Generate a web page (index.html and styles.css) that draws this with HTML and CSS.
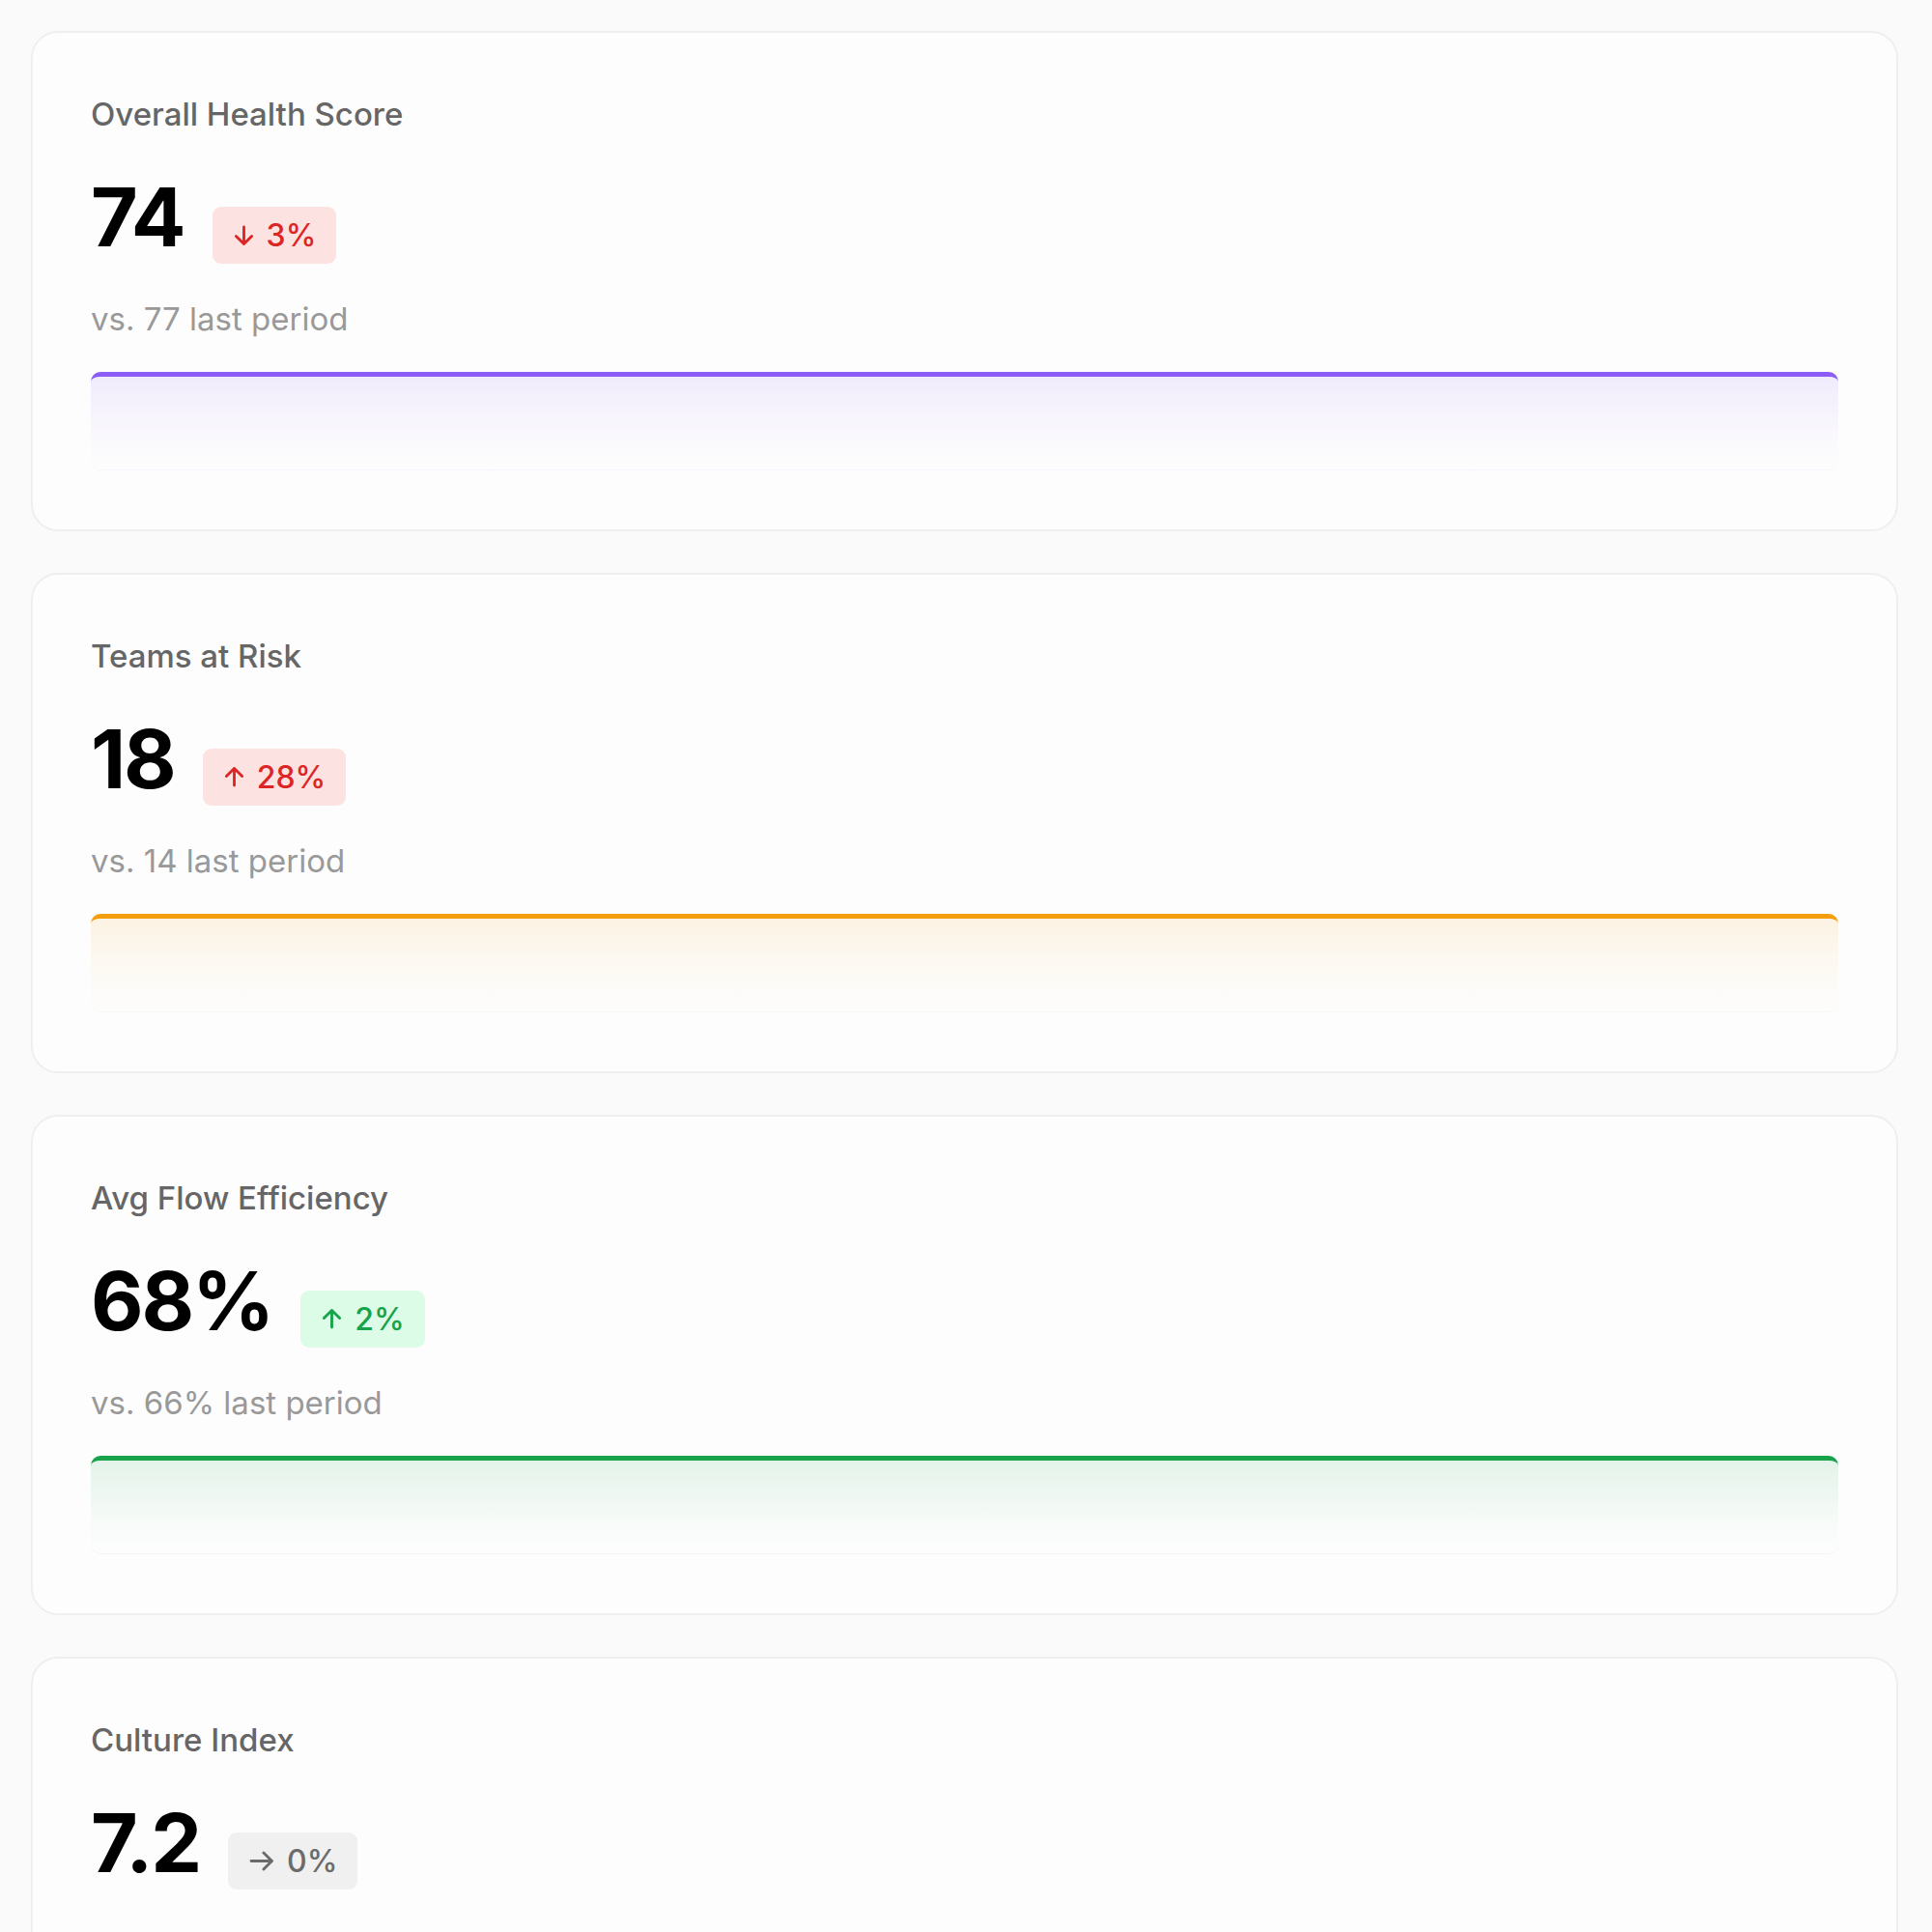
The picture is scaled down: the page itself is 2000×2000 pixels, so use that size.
FILE: index.html
```html
<!DOCTYPE html>
<html lang="en">
<head>
    <meta charset="UTF-8">
    <meta name="viewport" content="width=device-width, initial-scale=1.0">
    <title>Team Health Metrics</title>
    <link rel="stylesheet" href="styles.css">
</head>
<body>

    <div class="metric-list">

        <!-- Overall health -->
        <div class="metric-card">
            <h2 class="metric-title">Overall Health Score</h2>
            <div class="metric-row">
                <span class="metric-value">74</span>
                <span class="trend trend-bad">
                    <svg class="trend-icon" viewBox="0 0 22 22"><path d="M11 2v18.5M2.5 12l8.5 8.5 8.5-8.5"/></svg>
                    3%
                </span>
            </div>
            <p class="metric-sub">vs. 77 last period</p>
            <div class="spark spark-purple"></div>
        </div>

        <!-- Teams at risk -->
        <div class="metric-card">
            <h2 class="metric-title">Teams at Risk</h2>
            <div class="metric-row">
                <span class="metric-value">18</span>
                <span class="trend trend-bad">
                    <svg class="trend-icon" viewBox="0 0 22 22"><path d="M11 20V1.5M2.5 10l8.5-8.5 8.5 8.5"/></svg>
                    28%
                </span>
            </div>
            <p class="metric-sub">vs. 14 last period</p>
            <div class="spark spark-orange"></div>
        </div>

        <!-- Flow efficiency -->
        <div class="metric-card">
            <h2 class="metric-title">Avg Flow Efficiency</h2>
            <div class="metric-row">
                <span class="metric-value">68%</span>
                <span class="trend trend-good">
                    <svg class="trend-icon" viewBox="0 0 22 22"><path d="M11 20V1.5M2.5 10l8.5-8.5 8.5 8.5"/></svg>
                    2%
                </span>
            </div>
            <p class="metric-sub">vs. 66% last period</p>
            <div class="spark spark-green"></div>
        </div>

        <!-- Culture -->
        <div class="metric-card">
            <h2 class="metric-title">Culture Index</h2>
            <div class="metric-row">
                <span class="metric-value">7.2</span>
                <span class="trend trend-flat">
                    <svg class="trend-icon trend-icon-wide" viewBox="0 0 26 22"><path d="M1.5 11h22.5M15 2l9 9-9 9"/></svg>
                    0%
                </span>
            </div>
            <p class="metric-sub">vs. 7.2 last period</p>
            <div class="spark spark-blue"></div>
        </div>

    </div>

</body>
</html>
```

FILE: styles.css
```css
/* Page */
body {
    font-family: 'Inter', 'Noto Sans', sans-serif;
    background-color: #fafafa;
    margin: 0;
    padding: 32px 35px 40px 32px;
}

.metric-list {
    display: flex;
    flex-direction: column;
    gap: 43px;
}

/* Card */
.metric-card {
    background-color: #fdfdfd;
    border: 2px solid #efefef;
    border-radius: 28px;
    padding: 64px 60px 61px 60px;
}

.metric-title {
    margin: 0;
    font-size: 33px;
    line-height: 40px;
    font-weight: 500;
    color: #666666;
}

.metric-row {
    display: flex;
    align-items: baseline;
    gap: 29px;
    margin-top: 45px;
}

.metric-value {
    font-size: 84px;
    line-height: 84px;
    font-weight: 700;
    color: #000000;
    letter-spacing: -0.025em;
}

/* Trend badge */
.trend {
    display: inline-flex;
    align-items: baseline;
    gap: 13px;
    padding: 11px 21px 11px 22px;
    border-radius: 9px;
    font-size: 32px;
    line-height: 37px;
    font-weight: 500;
}

.trend-icon {
    width: 21px;
    height: 23px;
    fill: none;
    stroke: currentColor;
    stroke-width: 3;
    stroke-linecap: round;
    stroke-linejoin: round;
    align-self: center;
}

.trend-icon-wide {
    width: 26px;
    height: 21px;
}

.trend-bad {
    background-color: #fde2e2;
    color: #dc2626;
}

.trend-good {
    background-color: #dcfce7;
    color: #16a34a;
}

.trend-flat {
    background-color: #f0f0f0;
    color: #6b6b6b;
}

.metric-sub {
    margin: 37px 0 0 0;
    font-size: 33px;
    line-height: 40px;
    color: #999999;
}

/* Sparkline area */
.spark {
    margin-top: 35px;
    height: 97px;
    border-top: 5px solid;
    border-radius: 10px;
}

.spark-purple {
    border-color: #8b5cf6;
    background: linear-gradient(to bottom, rgba(139, 92, 246, 0.11), rgba(139, 92, 246, 0.03) 60%, rgba(139, 92, 246, 0));
    box-shadow: inset 0 -1px 0 rgba(139, 92, 246, 0.05);
}

.spark-orange {
    border-color: #f59e0b;
    background: linear-gradient(to bottom, rgba(245, 158, 11, 0.11), rgba(245, 158, 11, 0.03) 60%, rgba(245, 158, 11, 0));
    box-shadow: inset 0 -1px 0 rgba(245, 158, 11, 0.05);
}

.spark-green {
    border-color: #16a34a;
    background: linear-gradient(to bottom, rgba(22, 163, 74, 0.11), rgba(22, 163, 74, 0.03) 60%, rgba(22, 163, 74, 0));
    box-shadow: inset 0 -1px 0 rgba(22, 163, 74, 0.05);
}

.spark-blue {
    border-color: #3b82f6;
    background: linear-gradient(to bottom, rgba(59, 130, 246, 0.11), rgba(59, 130, 246, 0.03) 60%, rgba(59, 130, 246, 0));
    box-shadow: inset 0 -1px 0 rgba(59, 130, 246, 0.05);
}
```
